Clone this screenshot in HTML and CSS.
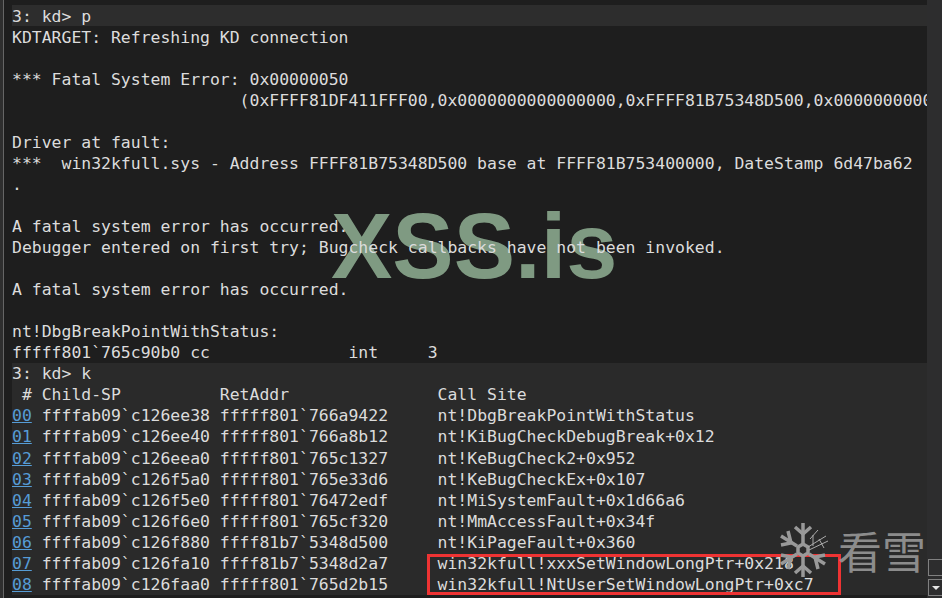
FILE: index.html
```html
<!DOCTYPE html>
<html lang="en">
<head>
<meta charset="utf-8">
<title>kd</title>
<link rel="stylesheet" href="styles.css">
</head>
<body>
<div class="window">
  <div class="edge"></div>
  <main class="console">
    <div class="watermark">XSS.is</div>
    <div class="block">
      <div class="prompt">3: kd&gt; p</div>
      <pre class="out">KDTARGET: Refreshing KD connection

*** Fatal System Error: 0x00000050
                       (0xFFFF81DF411FFF00,0x0000000000000000,0xFFFF81B75348D500,0x0000000000000002)

Driver at fault:
***  win32kfull.sys - Address FFFF81B75348D500 base at FFFF81B753400000, DateStamp 6d47ba62
.

A fatal system error has occurred.
Debugger entered on first try; Bugcheck callbacks have not been invoked.

A fatal system error has occurred.

nt!DbgBreakPointWithStatus:
fffff801`765c90b0 cc              int     3</pre>
    </div>
    <div class="block alt">
      <div class="prompt">3: kd&gt; k</div>
      <pre class="out"> # Child-SP          RetAddr               Call Site
<a class="frame">00</a> ffffab09`c126ee38 fffff801`766a9422     nt!DbgBreakPointWithStatus
<a class="frame">01</a> ffffab09`c126ee40 fffff801`766a8b12     nt!KiBugCheckDebugBreak+0x12
<a class="frame">02</a> ffffab09`c126eea0 fffff801`765c1327     nt!KeBugCheck2+0x952
<a class="frame">03</a> ffffab09`c126f5a0 fffff801`765e33d6     nt!KeBugCheckEx+0x107
<a class="frame">04</a> ffffab09`c126f5e0 fffff801`76472edf     nt!MiSystemFault+0x1d66a6
<a class="frame">05</a> ffffab09`c126f6e0 fffff801`765cf320     nt!MmAccessFault+0x34f
<a class="frame">06</a> ffffab09`c126f880 ffff81b7`5348d500     nt!KiPageFault+0x360
<a class="frame">07</a> ffffab09`c126fa10 ffff81b7`5348d2a7     win32kfull!xxxSetWindowLongPtr+0x218
<a class="frame">08</a> ffffab09`c126faa0 fffff801`765d2b15     win32kfull!NtUserSetWindowLongPtr+0xc7</pre>
    </div>
    <div class="highlight"></div>
    <div class="brand">
      <svg class="flake" viewBox="0 0 52 56" width="52" height="56" aria-hidden="true">
        <path class="arm" d="M26 1V22M26 34V55M4 14L20 24M32 32L48 42M4 42L20 32"/>
        <path class="arm" d="M18 5L26 12L34 5M18 51L26 44L34 51M4 23L14 21L11 9M48 33L38 35L41 47M4 33L14 35L11 47"/>
        <path class="arm" d="M21 25L26 22L31 25V31L26 34L21 31Z"/>
        <path class="thin" d="M31 25L49 14M32 28L51 19M36 13V24M41 8L33 17M42 17L47 26"/>
      </svg>
      <span class="brand-name">看雪</span>
    </div>
  </main>
  <aside class="rail">
    <span class="rail-spacer"></span>
    <span class="rail-box"></span>
    <span class="rail-box"><span class="rail-arrow"></span></span>
  </aside>
</div>
</body>
</html>
```
FILE: styles.css
```css
html, body {
  margin: 0;
  height: 100%;
  overflow: hidden;
}
.window {
  display: flex;
  width: 942px;
  height: 598px;
  overflow: hidden;
  background: #2d2d2e;
}
.edge {
  width: 3px;
  flex: none;
  background: #2f2f2f;
  border-right: 1px solid #666666;
}
.console {
  position: relative;
  width: 923px;
  flex: none;
  overflow: hidden;
  padding-top: 5px;
  box-sizing: border-box;
  background: #1e1e1e;
  color: #dcdcdc;
  font-family: "DejaVu Sans Mono", monospace;
  font-size: 16.44px;
  line-height: 21px;
}
.block {
  position: relative;
  z-index: 2;
}
.alt {
  margin-left: 8px;
  background: #2a2a2a;
  line-height: 21.13px;
}
.prompt {
  box-sizing: border-box;
  height: 21px;
  margin-left: 8px;
  padding-top: 1px;
  background: #2d2d2d;
}
.alt .prompt {
  height: auto;
  margin-left: 0;
  padding-top: 0;
  background: transparent;
}
.out {
  margin: 0 0 0 8px;
  padding-top: 1px;
  font: inherit;
  white-space: pre;
}
.alt .out {
  margin-left: 0;
  padding-top: 0;
}
.frame {
  color: #569cd6;
  text-decoration: underline;
}
.watermark {
  position: absolute;
  left: 327px;
  top: 196px;
  font-family: "Liberation Sans", sans-serif;
  font-weight: 700;
  font-size: 92px;
  line-height: 100px;
  color: #7f9a82;
  z-index: 1;
}
.highlight {
  position: absolute;
  left: 423px;
  top: 554px;
  width: 414px;
  height: 41px;
  box-sizing: border-box;
  border: 3px solid #ee3333;
  z-index: 3;
}
.brand {
  position: absolute;
  left: 773px;
  top: 522px;
  display: flex;
  align-items: center;
  gap: 9px;
  white-space: nowrap;
  z-index: 4;
}
.arm {
  fill: none;
  stroke: #999999;
  stroke-width: 3.5;
}
.thin {
  fill: none;
  stroke: #aaaaaa;
  stroke-width: 1;
}
.brand-name {
  font-family: "Noto Sans CJK SC", sans-serif;
  font-size: 44px;
  font-weight: 400;
  line-height: 56px;
  color: #8c8c8c;
}
.rail {
  flex: 1;
  display: flex;
  flex-direction: column;
  gap: 3px;
  padding-bottom: 2px;
}
.rail-spacer {
  flex: 1;
}
.rail-box {
  display: flex;
  align-items: center;
  justify-content: center;
  height: 17px;
  flex: none;
  box-sizing: border-box;
  border: 1px solid #808080;
  margin-left: 1px;
  margin-right: -2px;
}
.rail-arrow {
  width: 0;
  height: 0;
  border-left: 4px solid transparent;
  border-right: 4px solid transparent;
  border-top: 4px solid #e6e6e6;
}
```
